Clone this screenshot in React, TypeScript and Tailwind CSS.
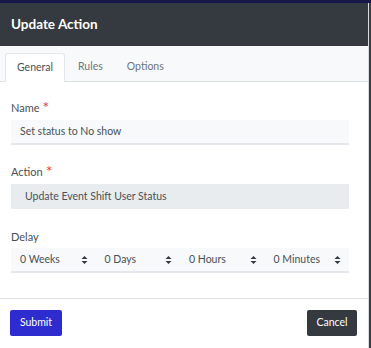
import React from 'react'

const font = { fontFamily: 'Lato, "Noto Sans", sans-serif' }

function Arrows() {
  return (
    <svg width="7" height="10" viewBox="0 0 7 10" className="shrink-0">
      <path d="M3.5 1 L6.5 4 L0.5 4 Z" fill="#343a40" />
      <path d="M3.5 9 L6.5 6 L0.5 6 Z" fill="#343a40" />
    </svg>
  )
}

function Label({ text, required }: { text: string; required?: boolean }) {
  return (
    <div className="flex items-start h-[16px] text-[11px] text-[#495057] leading-[16px]">
      <span>{text}</span>
      {required && <span className="ml-[3px] mt-[1px] text-[#f0334a] text-[16px] leading-[12px]">*</span>}
    </div>
  )
}

export default function App() {
  const delays = ['0 Weeks', '0 Days', '0 Hours', '0 Minutes']
  return (
    <div className="w-[371px] h-[348px] bg-[#3b3e43] flex flex-col" style={font}>
      <div className="h-[3px] bg-[#17174a] shrink-0" />
      <div className="flex flex-1 min-h-0">
        <div className="w-[368px] bg-white flex flex-col">
          {/* header */}
          <div className="h-[43px] bg-[#343a40] flex items-center px-[11px]">
            <span className="text-white font-bold text-[13.5px]">Update Action</span>
          </div>
          {/* tabs */}
          <div className="h-[36px] bg-[#f8f9fa] border-b border-[#dee2e6] flex items-end pl-[5px] text-[10.5px]">
            <div className="h-[29px] w-[60px] bg-white border border-b-0 border-[#e3e6ea] rounded-t-[3px] flex items-center justify-center text-[#495057] -mb-px">
              General
            </div>
            <div className="h-[29px] flex items-center text-[#6c757d] ml-[13px]">Rules</div>
            <div className="h-[29px] flex items-center text-[#6c757d] ml-[24px]">Options</div>
          </div>
          {/* body */}
          <div className="px-[11px] pt-[18px] flex flex-col">
            <Label text="Name" required />
            <div className="mt-[4px] h-[25px] w-[338px] bg-[#f8f9fa] border-b-2 border-[#e4e7eb] flex items-center px-[9px] text-[10.5px] text-[#495057]">
              Set status to No show
            </div>
            <div className="mt-[19px]">
              <Label text="Action" required />
            </div>
            <div className="mt-[4px] h-[25px] w-[338px] bg-[#e9ecef] flex items-center px-[14px] text-[10.5px] text-[#495057]">
              Update Event Shift User Status
            </div>
            <div className="mt-[20px]">
              <Label text="Delay" />
            </div>
            <div className="mt-[3px] h-[25px] w-[338px] bg-[#f8f9fa] border-b-2 border-[#e4e7eb] flex">
              {delays.map(d => (
                <div key={d} className="flex-1 flex items-center justify-between pl-[9px] pr-[8px] text-[10.5px] text-[#495057]">
                  <span>{d}</span>
                  <Arrows />
                </div>
              ))}
            </div>
          </div>
          {/* footer */}
          <div className="mt-auto border-t border-[#dee2e6] h-[50px] flex items-center justify-between px-[10px] pr-[11px] pb-[1px]">
            <button className="h-[26px] w-[52px] bg-[#2f2ccf] rounded-[2px] text-white text-[10.5px]">Submit</button>
            <button className="h-[26px] w-[50px] bg-[#343a40] rounded-[2px] text-white text-[10.5px]">Cancel</button>
          </div>
        </div>
        <div className="w-px bg-[#d9dbde]" />
      </div>
    </div>
  )
}
